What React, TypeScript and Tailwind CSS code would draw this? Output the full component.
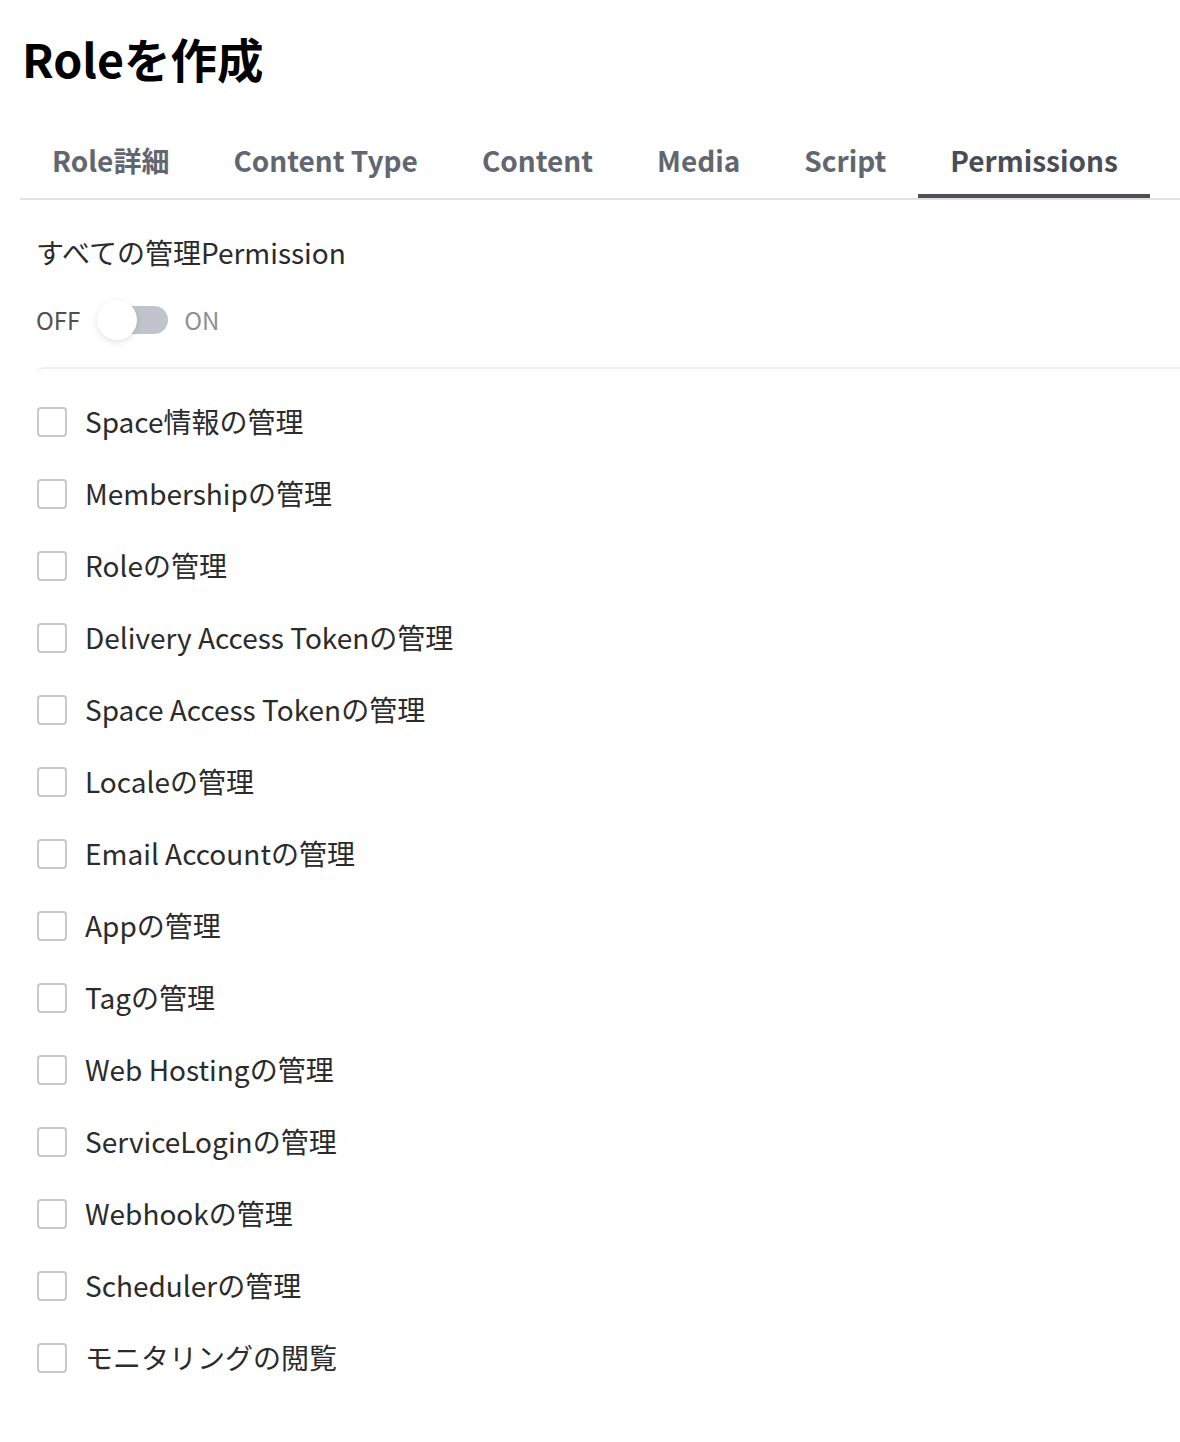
import React, { useState } from 'react'

const tabs = ['Role詳細', 'Content Type', 'Content', 'Media', 'Script', 'Permissions']

const permissions = [
  'Space情報の管理',
  'Membershipの管理',
  'Roleの管理',
  'Delivery Access Tokenの管理',
  'Space Access Tokenの管理',
  'Localeの管理',
  'Email Accountの管理',
  'Appの管理',
  'Tagの管理',
  'Web Hostingの管理',
  'ServiceLoginの管理',
  'Webhookの管理',
  'Schedulerの管理',
  'モニタリングの閲覧',
]

const App: React.FC = () => {
  const [active, setActive] = useState(5)
  const [allOn, setAllOn] = useState(false)
  const [checked, setChecked] = useState<boolean[]>(permissions.map(() => false))

  return (
    <div className="min-h-[1442px] bg-white pl-5 font-['Noto_Sans_CJK_JP','Noto_Sans',sans-serif]">
      {/* Header */}
      <h1 className="pt-[26px] h-[90px] pl-[2px] text-[46.5px] leading-[64px] font-bold text-black">Roleを作成</h1>

      {/* Tabs */}
      <div className="mt-[36px] flex border-b-2 border-[#e2e2e2]">
        {tabs.map((t, i) => (
          <button
            key={t}
            onClick={() => setActive(i)}
            className={`relative shrink-0 whitespace-nowrap h-[72px] pb-1 px-8 flex items-center text-[28px] font-semibold ${
              i === active ? 'text-[#4a4d57]' : 'text-[#62666f]'
            }`}
          >
            {t}
            {i === active && (
              <span className="absolute left-0 right-0 bottom-0 h-1 bg-[#4d5059]" />
            )}
          </button>
        ))}
      </div>

      <div className="pl-4">
        <p className="mt-[32px] h-10 leading-10 text-[28px] text-[#2b2b2b]">すべての管理Permission</p>

        {/* Toggle */}
        <div className="mt-[24px] h-12 flex items-center text-[24px]">
          <span className="text-[#505050]">OFF</span>
          <button
            onClick={() => setAllOn(!allOn)}
            className="relative w-[71px] h-10 ml-[17px] mr-[16px]"
          >
            <span className="absolute left-[3px] top-[6px] w-[68px] h-[28px] rounded-full bg-[#c1c4cc]" />
            <span
              className={`absolute top-0 w-10 h-10 rounded-full bg-white shadow-[0_2px_6px_rgba(0,0,0,0.12)] ${
                allOn ? 'left-[31px]' : 'left-0'
              }`}
            />
          </button>
          <span className="text-[#8d8f94]">ON</span>
        </div>

        {/* Permission list */}
        <div className="mt-[23px] border-t-2 border-[#efefef] rounded-tl-lg pt-[17px]">
          {permissions.map((p, i) => (
            <label key={p} className="h-[72px] flex items-center cursor-pointer">
              <input
                type="checkbox"
                className="hidden"
                checked={checked[i]}
                onChange={() => setChecked(checked.map((c, j) => (j === i ? !c : c)))}
              />
              <span className="ml-px w-[30px] h-[30px] rounded-[4px] border-2 border-[#c9c9c9] bg-white" />
              <span className="ml-[18px] pb-[2px] text-[28px] text-[#2b2b2b]">{p}</span>
            </label>
          ))}
        </div>
      </div>
    </div>
  )
}

export default App
